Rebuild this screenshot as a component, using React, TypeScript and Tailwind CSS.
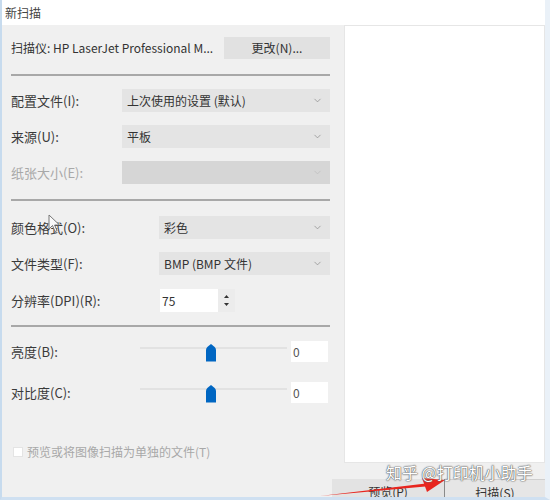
import { ChevronDown } from "lucide-react";

const font = "font-['Noto_Sans_CJK_SC','Noto_Sans',sans-serif]";

const Select = ({ value, disabled }: { value?: string; disabled?: boolean }) => (
  <div
    className={`flex-1 h-full flex items-center justify-between pl-[5px] pr-[7px] ${
      disabled ? "bg-[#d6d6d6]" : "bg-[#e4e4e4]"
    }`}
  >
    <span className="text-[12px] text-[#333]">{value}</span>
    <ChevronDown size={11} strokeWidth={1.5} className={disabled ? "text-[#bbb]" : "text-[#888]"} />
  </div>
);

const Separator = ({ className }: { className: string }) => (
  <div className={`h-[2px] bg-[#a8a8a8] ${className}`} />
);

const Thumb = () => (
  <svg width="12" height="19" viewBox="0 0 12 19" className="absolute left-[65px] top-[-4px]">
    <path d="M1 18.5 V7 Q1 5.2 2.6 3.8 L6 1 L9.4 3.8 Q11 5.2 11 7 V18.5 Z" fill="#0066c2" />
  </svg>
);

const SliderRow = ({ label, className }: { label: string; className: string }) => (
  <div className={`flex items-center h-[21px] ${className}`}>
    <span className="w-[129px] text-[13px] text-[#3a3a3a]">{label}</span>
    <div className="relative w-[147px] h-[2px] -mt-[8px] bg-[#e2e2e2]">
      <Thumb />
    </div>
    <div className="ml-[4px] w-[37px] h-full bg-white flex items-center pl-[2px] text-[12px] text-[#555]">
      0
    </div>
  </div>
);

const App = () => {
  return (
    <div
      className={`relative w-[550px] h-[500px] overflow-hidden flex flex-col bg-[#f0f0f0] border-l-2 border-l-[#c7dbee] border-r-[5px] border-r-[#eaf1f8] border-b-[3px] border-b-[#cfe0f1] ${font}`}
    >
      <div className="h-[25px] shrink-0 bg-white flex items-center pl-[3px] text-[12px] text-[#444]">
        新扫描
      </div>

      <div className="flex h-[438px] shrink-0">
        <div className="w-[342px] flex flex-col pt-[12px] pl-[9px] pr-[14px]">
          <div className="flex items-center justify-between h-[22px]">
            <span className="text-[12px] text-[#333]">
              扫描仪: HP LaserJet Professional M...
            </span>
            <div className="w-[106px] h-full bg-[#e1e1e1] flex items-center justify-center text-[12px] text-[#333]">
              更改(N)...
            </div>
          </div>

          <Separator className="mt-[15px]" />

          <div className="flex items-center h-[23px] mt-[13px]">
            <span className="w-[111px] text-[13px] text-[#3a3a3a]">配置文件(I):</span>
            <Select value="上次使用的设置 (默认)" />
          </div>
          <div className="flex items-center h-[23px] mt-[13px]">
            <span className="w-[111px] text-[13px] text-[#3a3a3a]">来源(U):</span>
            <Select value="平板" />
          </div>
          <div className="flex items-center h-[23px] mt-[13px]">
            <span className="w-[111px] text-[13px] text-[#a8a8a8]">纸张大小(E):</span>
            <Select disabled />
          </div>

          <Separator className="mt-[15px]" />

          <div className="flex items-center h-[23px] mt-[15px]">
            <span className="w-[148px] text-[13px] text-[#3a3a3a]">颜色格式(O):</span>
            <Select value="彩色" />
          </div>
          <div className="flex items-center h-[23px] mt-[13px]">
            <span className="w-[148px] text-[13px] text-[#3a3a3a]">文件类型(F):</span>
            <Select value="BMP (BMP 文件)" />
          </div>
          <div className="flex items-center h-[23px] mt-[14px]">
            <span className="w-[149px] text-[13px] text-[#3a3a3a]">分辨率(DPI)(R):</span>
            <div className="w-[58px] h-full bg-white flex items-center pl-[2px] text-[12px] text-[#333]">
              75
            </div>
            <div className="w-[17px] h-full bg-[#ececec] flex flex-col items-center justify-center gap-[5px]">
              <svg width="5" height="3" viewBox="0 0 5 3">
                <path d="M0 3 L2.5 0 L5 3 Z" fill="#333" />
              </svg>
              <svg width="5" height="3" viewBox="0 0 5 3">
                <path d="M0 0 L2.5 3 L5 0 Z" fill="#333" />
              </svg>
            </div>
          </div>

          <Separator className="mt-[13px]" />

          <SliderRow label="亮度(B):" className="mt-[14px]" />
          <SliderRow label="对比度(C):" className="mt-[20px]" />

          <div className="flex items-center mt-[44px] h-[10px]">
            <div className="w-[10px] h-[10px] ml-[2px] bg-white border border-[#e4e4e4]" />
            <span className="ml-[4px] text-[12px] text-[#a8a8a8]">预览或将图像扫描为单独的文件(T)</span>
          </div>
        </div>

        <div className="flex-1 bg-white border border-[#e6e6e6]" />
      </div>

      <div className="flex justify-end mt-[16px] shrink-0">
        <div className="w-[113px] h-[26px] bg-[#e3e3e3] border-r border-[#8a8a8a] flex items-center justify-center text-[12px] text-[#333]">
          预览(P)
        </div>
        <div className="w-[100px] h-[26px] bg-[#e6e6e6] border-t border-[#cfcfcf] flex items-center justify-center text-[12px] text-[#333]">
          扫描(S)
        </div>
      </div>

      {/* mouse pointer */}
      <svg width="14" height="20" viewBox="0 0 14 20" className="absolute left-[46px] top-[214px]">
        <path d="M1 1 L1 15 L4.5 11.5 L7 17.5 L9 16.7 L6.6 11 L11.5 11 Z" fill="#fafafa" stroke="#777" strokeWidth="1" strokeLinejoin="round" />
      </svg>

      {/* red arrow annotation */}
      <svg width="140" height="30" viewBox="0 0 140 30" className="absolute left-[316px] top-[472px]">
        <path d="M2 24 L112 11 L113 14 Z" fill="#e8261f" />
        <path d="M104 6 L127 8 L109 20 Z" fill="#e8261f" />
      </svg>

      <span className="absolute left-[384px] top-[461px] whitespace-nowrap text-[16px] leading-[22px] text-white [text-shadow:0_0_1px_#555,0_0_1px_#555,0_0_2px_#888]">
        知乎 @打印机小助手
      </span>
    </div>
  );
};

export default App;
